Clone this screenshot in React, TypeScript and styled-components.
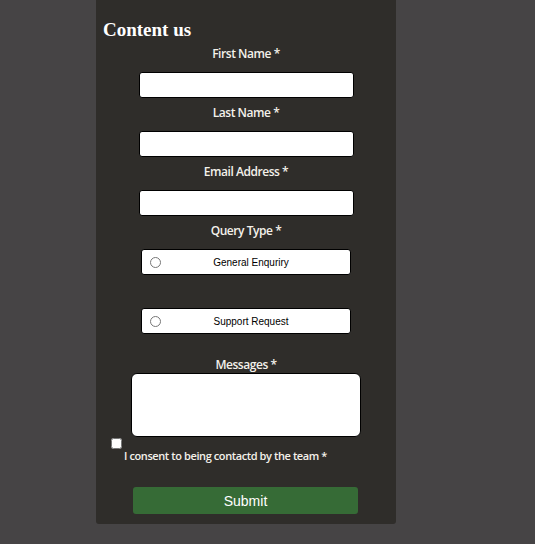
import React from "react";
import styled, { createGlobalStyle } from "styled-components";

const Global = createGlobalStyle`
  html, body { margin: 0; padding: 0; background: #464445; }
  body { font-family: "Open Sans", "DejaVu Sans", sans-serif; }
`;

const Card = styled.form`
  box-sizing: border-box;
  width: 300px;
  margin-left: 96px;
  background: #2f2d2a;
  border-radius: 0 0 3px 3px;
  padding: 18px 0 10px 7px;
  display: flex;
  flex-direction: column;
`;

const Title = styled.h2`
  margin: 0;
  font-family: "Liberation Serif", serif;
  font-weight: bold;
  font-size: 19px;
  line-height: 24px;
  color: #ffffff;
`;

const Field = styled.div<{ $gap?: number }>`
  display: flex;
  flex-direction: column;
  align-items: center;
  margin-right: 7px;
  margin-top: ${(p) => p.$gap ?? 0}px;
`;

const Label = styled.label`
  font-family: "Open Sans", sans-serif;
  font-size: 12px;
  font-weight: 600;
  color: #f4f1ea;
  line-height: 16px;
  letter-spacing: -0.45px;
`;

const TextInput = styled.input`
  box-sizing: border-box;
  width: 215px;
  height: 26px;
  margin-top: 10px;
  border: 1px solid #000;
  border-radius: 3px;
  background: #fff;
  padding: 0 4px;
`;

const RadioBox = styled.label`
  box-sizing: border-box;
  width: 210px;
  height: 26px;
  border: 1px solid #000;
  border-radius: 3px;
  background: #fff;
  display: flex;
  align-items: center;
  padding-left: 8px;
  font-family: "Liberation Sans", Arial, sans-serif;
  font-size: 10px;
  color: #000;
`;

const Radio = styled.input`
  margin: 0;
  width: 11px;
  height: 11px;
`;

const RadioText = styled.span`
  flex: 1;
  text-align: center;
  margin-right: 9px;
`;

const TextArea = styled.textarea`
  box-sizing: border-box;
  width: 230px;
  height: 64px;
  margin-top: 0;
  border: 1px solid #000;
  border-radius: 6px;
  background: #fff;
  resize: none;
`;

const Consent = styled.div`
  display: flex;
  flex-direction: column;
  align-items: flex-start;
  padding-left: 8px;
  margin-top: 1px;
`;

const Check = styled.input`
  margin: 0;
  width: 11px;
  height: 11px;
`;

const ConsentText = styled.span`
  margin-left: 13px;
  margin-top: -1px;
  font-family: "Open Sans", sans-serif;
  font-size: 11px;
  font-weight: 600;
  color: #f4f1ea;
  line-height: 16px;
  letter-spacing: -0.4px;
`;

const Submit = styled.button`
  width: 225px;
  height: 27px;
  margin: 23px 0 0 30px;
  border: none;
  border-radius: 3px;
  background: #366b36;
  color: #fff;
  font-family: "Liberation Sans", Arial, sans-serif;
  font-size: 14px;
  padding: 0;
`;

export default function App() {
  return (
    <>
      <Global />
      <Card onSubmit={(e) => e.preventDefault()}>
        <Title>Content us</Title>
        <Field $gap={4}>
          <Label>First Name *</Label>
          <TextInput type="text" />
        </Field>
        <Field $gap={7}>
          <Label>Last Name *</Label>
          <TextInput type="text" />
        </Field>
        <Field $gap={7}>
          <Label>Email Address *</Label>
          <TextInput type="email" />
        </Field>
        <Field $gap={7}>
          <Label>Query Type *</Label>
        </Field>
        <Field $gap={10}>
          <RadioBox>
            <Radio type="radio" name="q" />
            <RadioText>General Enquriry</RadioText>
          </RadioBox>
        </Field>
        <Field $gap={33}>
          <RadioBox>
            <Radio type="radio" name="q" />
            <RadioText>Support Request</RadioText>
          </RadioBox>
        </Field>
        <Field $gap={23}>
          <Label>Messages *</Label>
          <TextArea />
        </Field>
        <Consent>
          <Check type="checkbox" />
          <ConsentText>I consent to being contactd by the team *</ConsentText>
        </Consent>
        <Submit type="submit">Submit</Submit>
      </Card>
    </>
  );
}
